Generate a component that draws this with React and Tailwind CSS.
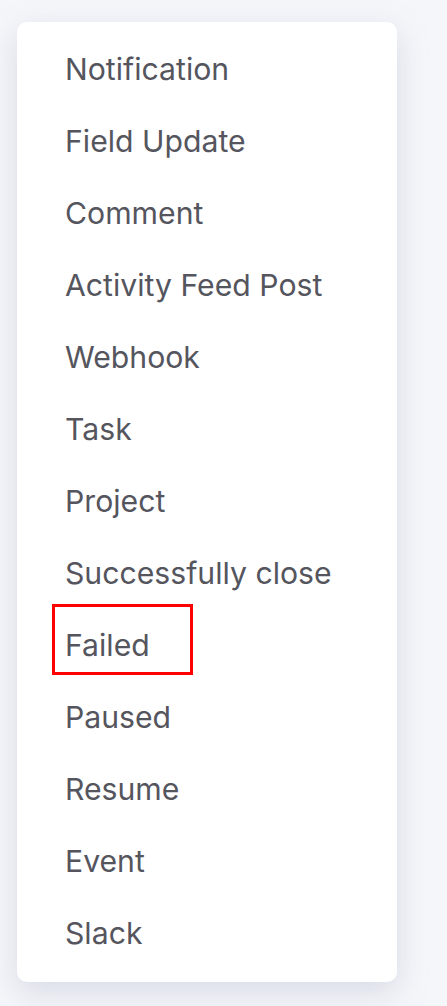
import React from 'react';

const items = [
    'Notification',
    'Field Update',
    'Comment',
    'Activity Feed Post',
    'Webhook',
    'Task',
    'Project',
    'Successfully close',
    'Failed',
    'Paused',
    'Resume',
    'Event',
    'Slack',
];

export default function App() {
    return (
        <div className="min-h-[1006px] w-[447px] bg-[#f5f6fa] pt-[22px] pl-[17px] font-['Inter',sans-serif]">
            <ul className="relative w-[380px] rounded-[10px] bg-white py-3 shadow-[0_10px_30px_rgba(160,168,190,0.35)]">
                {items.map((item) => (
                    <li key={item} className="relative flex h-[72px] items-center pl-[48px] text-[30.2px] text-[#55555e]">
                        {item}
                        {item === 'Failed' && (
                            <span className="absolute left-[35px] top-[-6px] h-[71px] w-[141px] border-[3px] border-[#ff0000]" />
                        )}
                    </li>
                ))}
            </ul>
        </div>
    );
}
